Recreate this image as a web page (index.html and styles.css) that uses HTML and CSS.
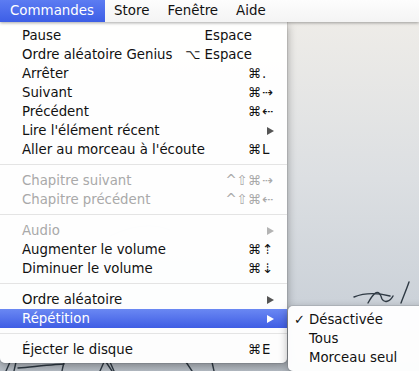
FILE: index.html
```html
<!DOCTYPE html>
<html lang="fr">

<head>
  <meta charset="UTF-8">
  <meta name="viewport" content="width=device-width, initial-scale=1.0">
  <title>Commandes</title>

  <link rel="stylesheet" href="styles.css">
</head>

<body>
  <div class="menubar">
    <span class="title active">Commandes</span>
    <span class="title">Store</span>
    <span class="title">Fenêtre</span>
    <span class="title">Aide</span>
  </div>

  <div class="desktop">
    <!-- croquis du fond d'écran -->
    <svg class="sketch" width="419" height="349" viewBox="0 22 419 349">
      <g fill="none" stroke="#2f3a44" stroke-width="1.4" stroke-linecap="round">
        <path d="M354 297 C 364 293, 378 293, 390 296" />
        <path d="M368 303 C 374 292, 379 288, 382 299 C 384 303, 390 302, 393 296" />
        <path d="M401 303 C 404 295, 407 288, 409 282" />
        <path d="M6 371 L 10 362" />
        <path d="M14 371 L 16 362" />
        <path d="M18 368 C 40 366, 60 364, 64 364" />
        <path d="M62 371 L 64 362" />
        <path d="M100 371 L 104 362" />
        <path d="M106 362 L 112 371" />
        <path d="M110 362 L 114 371" />
        <path d="M186 362 L 192 371" />
        <path d="M212 362 L 214 371" />
      </g>
      <g fill="none" stroke="#c9ccd0" stroke-width="1.2">
        <path d="M110 236 C 130 226, 150 222, 170 230" />
        <path d="M60 260 C 90 250, 120 248, 150 256" />
      </g>
    </svg>

    <div class="menu main">
      <div class="item"><span class="label">Pause</span><span class="mods space">Espace</span><span class="key"></span></div>
      <div class="item"><span class="label">Ordre aléatoire Genius</span><span class="mods space">⌥ Espace</span><span class="key"></span></div>
      <div class="item"><span class="label">Arrêter</span><span class="mods">⌘</span><span class="key">.</span></div>
      <div class="item"><span class="label">Suivant</span><span class="mods">⌘</span><span class="key">⇢</span></div>
      <div class="item"><span class="label">Précédent</span><span class="mods">⌘</span><span class="key">⇠</span></div>
      <div class="item"><span class="label">Lire l'élément récent</span><span class="mods"></span><span class="key"><i class="arrow"></i></span></div>
      <div class="item"><span class="label">Aller au morceau à l'écoute</span><span class="mods">⌘</span><span class="key">L</span></div>
      <div class="sep"></div>
      <div class="item disabled"><span class="label">Chapitre suivant</span><span class="mods">^⇧⌘</span><span class="key">⇢</span></div>
      <div class="item disabled"><span class="label">Chapitre précédent</span><span class="mods">^⇧⌘</span><span class="key">⇠</span></div>
      <div class="sep"></div>
      <div class="item disabled"><span class="label">Audio</span><span class="mods"></span><span class="key"><i class="arrow"></i></span></div>
      <div class="item"><span class="label">Augmenter le volume</span><span class="mods">⌘</span><span class="key">⇡</span></div>
      <div class="item"><span class="label">Diminuer le volume</span><span class="mods">⌘</span><span class="key">⇣</span></div>
      <div class="sep"></div>
      <div class="item"><span class="label">Ordre aléatoire</span><span class="mods"></span><span class="key"><i class="arrow"></i></span></div>
      <div class="item selected"><span class="label">Répétition</span><span class="mods"></span><span class="key"><i class="arrow"></i></span></div>
      <div class="sep"></div>
      <div class="item"><span class="label">Éjecter le disque</span><span class="mods">⌘</span><span class="key">E</span></div>
    </div>

    <div class="menu submenu">
      <div class="item"><span class="check">✓</span><span class="label">Désactivée</span></div>
      <div class="item"><span class="check"></span><span class="label">Tous</span></div>
      <div class="item"><span class="check"></span><span class="label">Morceau seul</span></div>
    </div>
  </div>
</body>

</html>
```

FILE: styles.css
```css
html,
body {
  margin: 0;
  padding: 0;
}

body {
  width: 419px;
  height: 371px;
  overflow: hidden;
  font-family: "DejaVu Sans", "Liberation Sans", sans-serif;
  font-size: 13.3px;
  color: #111;
  background: #c2c8cf;
}

/* barre de menus */
.menubar {
  position: relative;
  z-index: 3;
  height: 22px;
  display: flex;
  align-items: stretch;
  background: linear-gradient(#fdfdfd, #f4f4f4);
  box-shadow: 0 1px 3px rgba(0, 0, 0, 0.35);
  font-size: 13.4px;
}

.title {
  display: flex;
  align-items: center;
  padding: 0 9px;
  line-height: 22px;
}

.title.active {
  padding: 0 11px 0 10px;
  color: #fff;
  background: linear-gradient(#5c7cf2, #3d5ee6);
}

/* bureau */
.desktop {
  position: relative;
  height: 349px;
  background: linear-gradient(#eeece8 0%, #dcdfe2 45%, #ccd2d9 80%, #b8bfc7 100%);
}

.sketch {
  position: absolute;
  left: 0;
  top: 0;
}

/* menus */
.menu {
  position: absolute;
  z-index: 2;
  background: rgba(255, 255, 255, 0.96);
  box-shadow: 0 3px 10px rgba(0, 0, 0, 0.35), 0 0 0 1px rgba(0, 0, 0, 0.08);
}

.main {
  left: 0;
  top: 0;
  width: 287px;
  padding: 4px 0;
  border-radius: 0 0 5px 5px;
}

.submenu {
  left: 288px;
  top: 284px;
  width: 150px;
  padding: 4px 0;
  border-radius: 5px;
}

.item {
  display: flex;
  align-items: center;
  height: 19px;
}

.label {
  flex: 1;
  padding-left: 22px;
  white-space: nowrap;
}

.mods {
  text-align: right;
  white-space: nowrap;
}

.mods.space {
  padding-right: 9px;
}

.key {
  width: 17px;
  padding: 0 8px 0 1px;
}

.arrow {
  display: block;
  margin-left: 5px;
  width: 0;
  height: 0;
  border-left: 7px solid #555;
  border-top: 4px solid transparent;
  border-bottom: 4px solid transparent;
}

.disabled {
  color: #a9a9a9;
}

.disabled .arrow {
  border-left-color: #b4b4b4;
}

.selected {
  color: #fff;
  background: linear-gradient(#6a88f3, #3f5de4);
}

.selected .arrow {
  border-left-color: #fff;
}

.sep {
  height: 1px;
  margin: 5px 0 6px;
  background: #e4e4e4;
}

.submenu .label {
  padding-left: 0;
}

.check {
  width: 15px;
  padding-left: 6px;
  font-size: 13px;
}
```
